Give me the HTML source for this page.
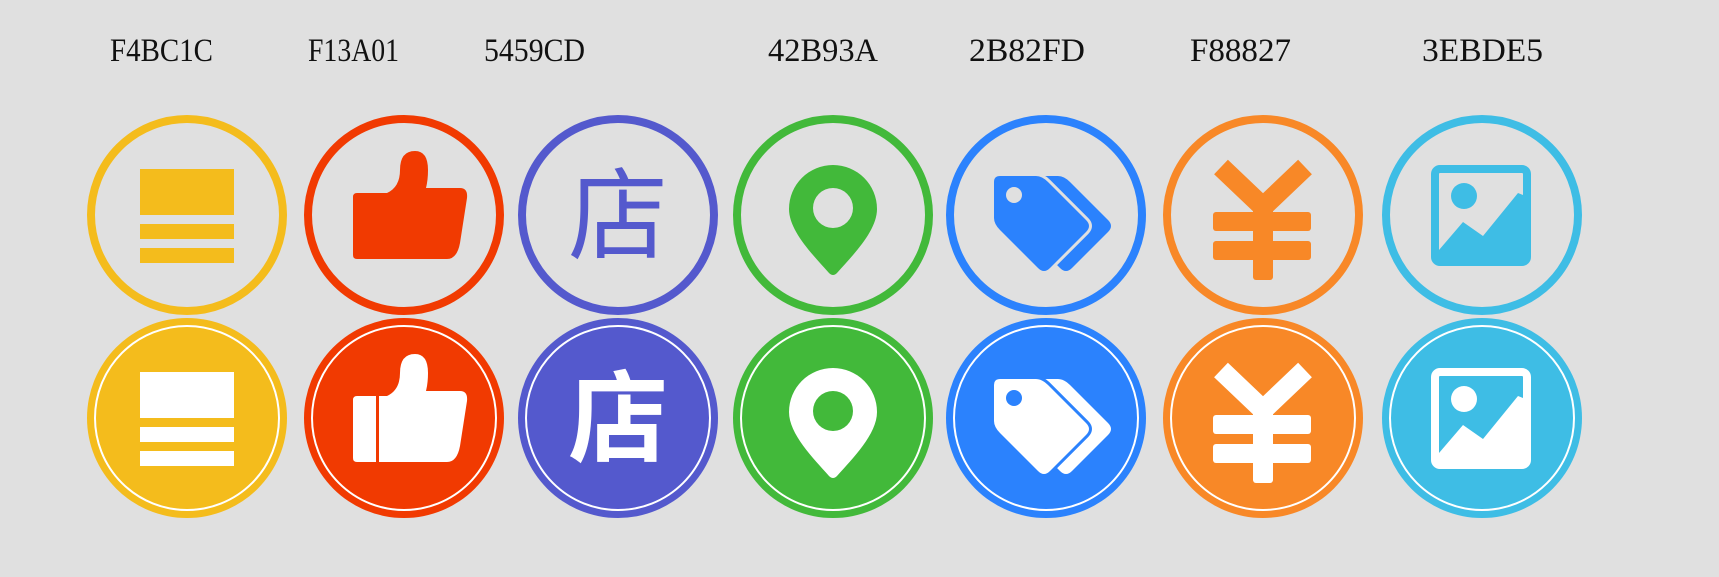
<!DOCTYPE html>
<html><head><meta charset="utf-8"><style>
html,body{margin:0;padding:0;background:#e0e0e0;}
svg{display:block}
.lbl{font-family:"Liberation Serif",serif;font-size:33px;fill:#111}
</style></head><body>
<svg width="1719" height="577" viewBox="0 0 1719 577" xmlns="http://www.w3.org/2000/svg">
<rect width="1719" height="577" fill="#e0e0e0"/>
<text class="lbl" x="110" y="61" textLength="103" lengthAdjust="spacingAndGlyphs">F4BC1C</text>
<text class="lbl" x="308" y="61" textLength="91" lengthAdjust="spacingAndGlyphs">F13A01</text>
<text class="lbl" x="484" y="61" textLength="101" lengthAdjust="spacingAndGlyphs">5459CD</text>
<text class="lbl" x="768" y="61" textLength="110" lengthAdjust="spacingAndGlyphs">42B93A</text>
<text class="lbl" x="969" y="61" textLength="116" lengthAdjust="spacingAndGlyphs">2B82FD</text>
<text class="lbl" x="1190" y="61" textLength="101" lengthAdjust="spacingAndGlyphs">F88827</text>
<text class="lbl" x="1422" y="61" textLength="121" lengthAdjust="spacingAndGlyphs">3EBDE5</text>

<defs>
<path id="thumb" d="M-51,-18 Q-51,-22 -47,-22 L-17,-22 Q-4,-28 -4,-45 Q-4,-64 11,-64 Q24,-64 24,-45 Q24,-35 22,-27 L56,-27 Q64,-27 63,-17 L56,28 Q53,44 43,44 L-47,44 Q-51,44 -51,40 Z"/>
<path id="tag" d="M-52,-33 Q-52,-39 -46,-39 L-10,-39 Q-4,-39 2,-33 L40,5 Q46,11 40,17 L4,53 Q-2,59 -8,53 L-46,15 Q-52,9 -52,3 Z"/>
<path id="pinp" fill-rule="evenodd" d="M-44,-6 A44,44 0 0 1 44,-6 C44,16 20,40 4,58 Q0,62 -4,58 C-20,40 -44,16 -44,-6 Z M-20,-7 A20,20 0 1 0 20,-7 A20,20 0 1 0 -20,-7 Z"/>
<path id="pinfull" d="M-44,-6 A44,44 0 0 1 44,-6 C44,16 20,40 4,58 Q0,62 -4,58 C-20,40 -44,16 -44,-6 Z"/>
</defs>

<g transform="translate(187,215)" fill="#F4BC1C">
<circle r="96" fill="none" stroke="#F4BC1C" stroke-width="8"/>
<rect x="-47" y="-46" width="94" height="46"/><rect x="-47" y="9" width="94" height="15"/><rect x="-47" y="33" width="94" height="15"/>
</g>
<g transform="translate(187,418)">
<circle r="100" fill="#F4BC1C"/><circle r="92" fill="none" stroke="#fff" stroke-width="2"/>
<g fill="#fff"><rect x="-47" y="-46" width="94" height="46"/><rect x="-47" y="9" width="94" height="15"/><rect x="-47" y="33" width="94" height="15"/></g>
</g>

<g transform="translate(404,215)">
<circle r="96" fill="none" stroke="#F13A01" stroke-width="8"/>
<use href="#thumb" fill="#F13A01"/>
</g>
<g transform="translate(404,418)">
<circle r="100" fill="#F13A01"/><circle r="92" fill="none" stroke="#fff" stroke-width="2"/>
<use href="#thumb" fill="#fff"/><rect x="-28" y="-24" width="3" height="70" fill="#F13A01"/>
</g>

<g transform="translate(618,215)">
<circle r="96" fill="none" stroke="#5459CD" stroke-width="8"/>
<text x="0" y="36" text-anchor="middle" font-family="Noto Sans CJK SC, sans-serif" font-size="100" fill="#5459CD">店</text>
</g>
<g transform="translate(618,418)">
<circle r="100" fill="#5459CD"/><circle r="92" fill="none" stroke="#fff" stroke-width="2"/>
<text x="0" y="36" text-anchor="middle" font-family="Noto Sans CJK SC, sans-serif" font-weight="bold" font-size="100" fill="#fff">店</text>
</g>

<g transform="translate(833,215)">
<circle r="96" fill="none" stroke="#42B93A" stroke-width="8"/>
<use href="#pinp" fill="#42B93A"/>
</g>
<g transform="translate(833,418)">
<circle r="100" fill="#42B93A"/><circle r="92" fill="none" stroke="#fff" stroke-width="2"/>
<use href="#pinfull" fill="#fff"/><circle cx="0" cy="-7" r="20" fill="#42B93A"/>
</g>

<g transform="translate(1046,215)">
<circle r="96" fill="none" stroke="#2B82FD" stroke-width="8"/>
<use href="#tag" fill="#2B82FD" transform="translate(22,0)"/>
<use href="#tag" fill="#2B82FD" stroke="#e0e0e0" stroke-width="6" paint-order="stroke"/>
<circle cx="-32" cy="-20" r="8" fill="#e0e0e0"/>
</g>
<g transform="translate(1046,418)">
<circle r="100" fill="#2B82FD"/><circle r="92" fill="none" stroke="#fff" stroke-width="2"/>
<use href="#tag" fill="#fff" transform="translate(22,0)"/>
<use href="#tag" fill="#fff" stroke="#2B82FD" stroke-width="6" paint-order="stroke"/>
<circle cx="-32" cy="-20" r="8" fill="#2B82FD"/>
</g>

<g transform="translate(1263,215)">
<circle r="96" fill="none" stroke="#F88827" stroke-width="8"/>
<g fill="#F88827">
<path d="M-42,-48 L0,-8 L42,-48" fill="none" stroke="#F88827" stroke-width="20" stroke-linecap="butt"/>
<rect x="-50" y="-3" width="98" height="19" rx="3"/><rect x="-50" y="26" width="98" height="19" rx="3"/>
<rect x="-10" y="-10" width="20" height="75" rx="3"/>
</g>
</g>
<g transform="translate(1263,418)">
<circle r="100" fill="#F88827"/><circle r="92" fill="none" stroke="#fff" stroke-width="2"/>
<g fill="#fff">
<path d="M-42,-48 L0,-8 L42,-48" fill="none" stroke="#fff" stroke-width="20" stroke-linecap="butt"/>
<rect x="-50" y="-3" width="98" height="19" rx="3"/><rect x="-50" y="26" width="98" height="19" rx="3"/>
<rect x="-10" y="-10" width="20" height="75" rx="3"/>
</g>
</g>

<g transform="translate(1482,215)">
<circle r="96" fill="none" stroke="#3EBDE5" stroke-width="8"/>
<rect x="-47" y="-46" width="92" height="93" rx="5" fill="none" stroke="#3EBDE5" stroke-width="8"/>
<circle cx="-18" cy="-19" r="13" fill="#3EBDE5"/>
<path d="M-43,35 L-19,7 L1,21 L36,-22 L41,-20 L41,47 L-43,47 Z" fill="#3EBDE5"/>
</g>
<g transform="translate(1482,418)">
<circle r="100" fill="#3EBDE5"/><circle r="92" fill="none" stroke="#fff" stroke-width="2"/>
<rect x="-47" y="-46" width="92" height="93" rx="5" fill="none" stroke="#fff" stroke-width="8"/>
<circle cx="-18" cy="-19" r="13" fill="#fff"/>
<path d="M-43,35 L-19,7 L1,21 L36,-22 L41,-20 L41,47 L-43,47 Z" fill="#fff"/>
</g>
</svg>
</body></html>
